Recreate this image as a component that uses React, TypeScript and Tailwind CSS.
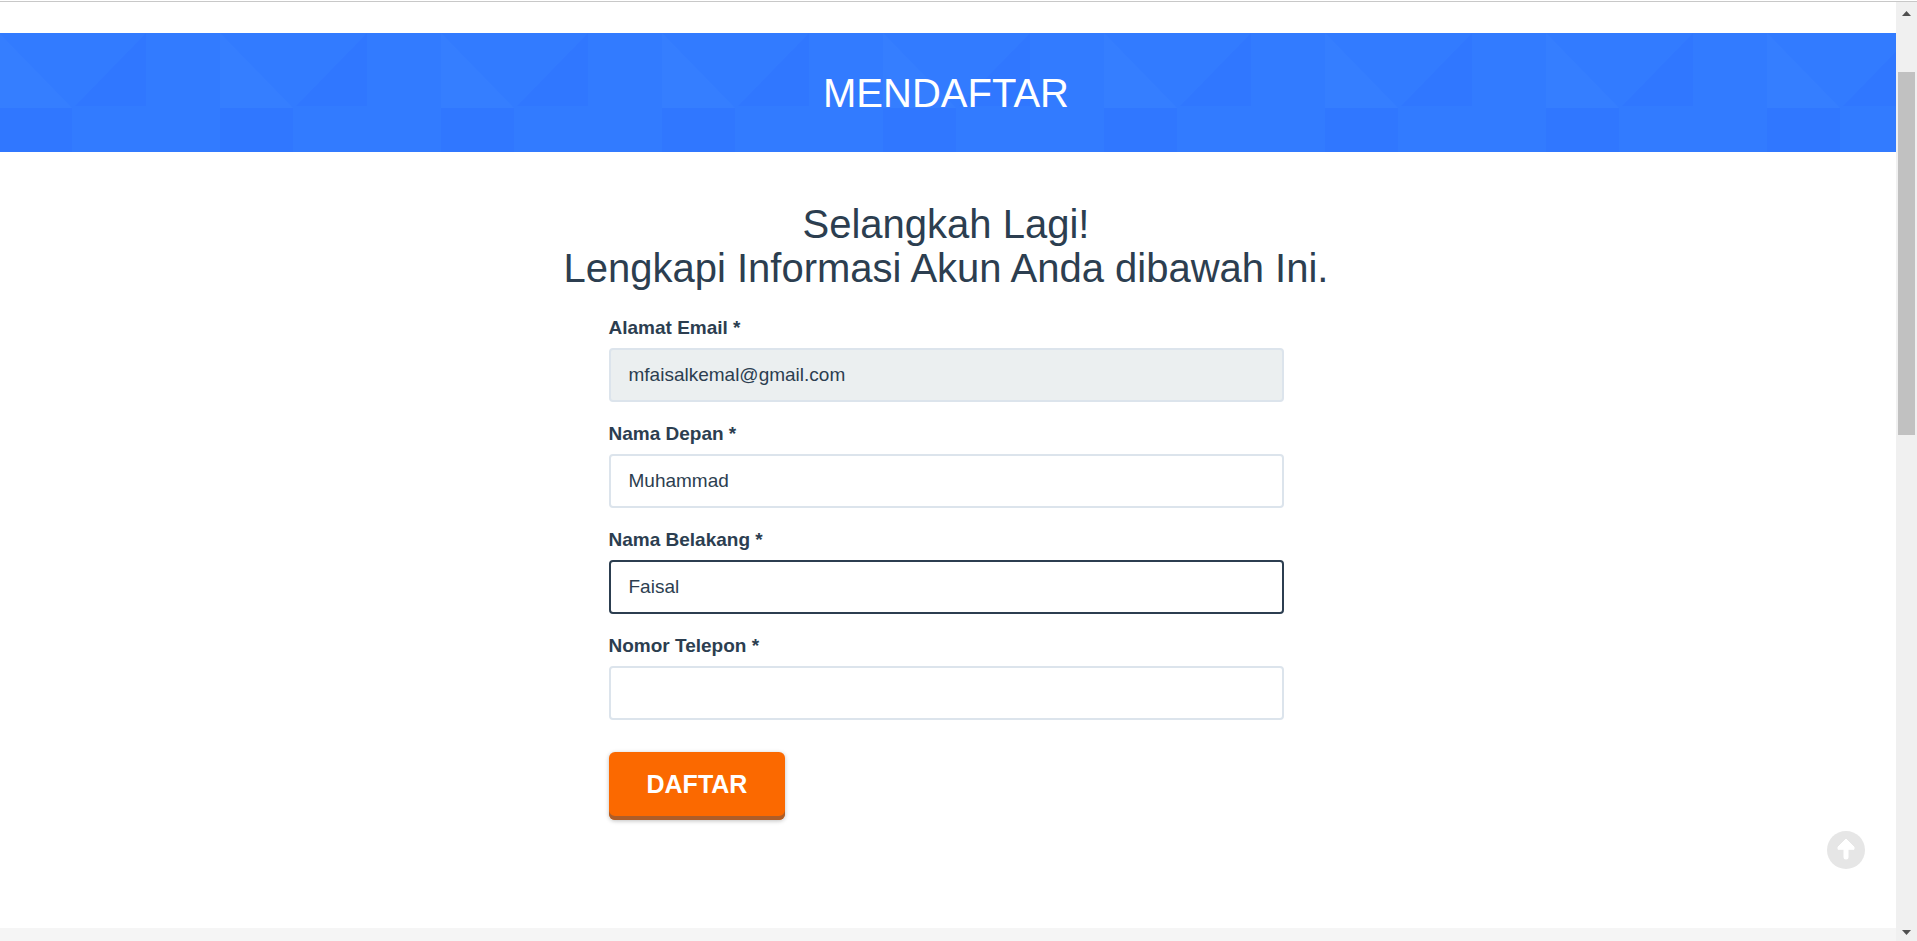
import { useState } from "react";

type Field = {
  id: string;
  label: string;
  type: string;
  value: string;
  readOnly?: boolean;
  active?: boolean;
};

const initialFields: Field[] = [
  { id: "email", label: "Alamat Email *", type: "email", value: "mfaisalkemal@gmail.com", readOnly: true },
  { id: "first-name", label: "Nama Depan *", type: "text", value: "Muhammad" },
  { id: "last-name", label: "Nama Belakang *", type: "text", value: "Faisal", active: true },
  { id: "phone", label: "Nomor Telepon *", type: "tel", value: "" },
];

function BannerPattern() {
  return (
    <svg className="absolute inset-0 h-full w-full" aria-hidden="true">
      <defs>
        <pattern id="tiles" x="-1" y="0" width="221" height="148" patternUnits="userSpaceOnUse">
          <path d="M0 0L73 75H0Z" fill="#357eff" />
          <path d="M76 73L147 0V73Z" fill="#3077ff" />
          <rect x="0" y="75" width="73" height="73" fill="#3077ff" />
        </pattern>
      </defs>
      <rect width="100%" height="100%" fill="url(#tiles)" />
    </svg>
  );
}

function Banner() {
  return (
    <header className="relative bg-[#327bff] pt-[37px] pr-1 pb-[35px]">
      <BannerPattern />
      <h1 className="relative text-center text-[40px] leading-[47px] text-white">MENDAFTAR</h1>
    </header>
  );
}

function TextField({ field, onChange }: { field: Field; onChange: (value: string) => void }) {
  const tone = field.active
    ? "border-[#2c3e50] bg-white"
    : field.readOnly
      ? "border-[#dce4ec] bg-[#ebeff0]"
      : "border-[#dce4ec] bg-white";
  return (
    <div className="flex flex-col gap-2">
      <label htmlFor={field.id} className="text-[19px] leading-6 font-bold">
        {field.label}
      </label>
      <input
        id={field.id}
        type={field.type}
        value={field.value}
        readOnly={field.readOnly}
        onChange={(event) => onChange(event.target.value)}
        className={`h-[54px] w-full rounded border-2 px-[18px] text-[19px] outline-none ${tone}`}
      />
    </div>
  );
}

function SignupForm() {
  const [fields, setFields] = useState(initialFields);
  const update = (id: string, value: string) =>
    setFields((current) => current.map((f) => (f.id === id ? { ...f, value } : f)));

  return (
    <form
      className="mx-auto flex w-full max-w-[675px] flex-col items-start"
      onSubmit={(event) => event.preventDefault()}
    >
      <div className="flex w-full flex-col gap-5">
        {fields.map((field) => (
          <TextField key={field.id} field={field} onChange={(value) => update(field.id, value)} />
        ))}
      </div>
      <button
        type="submit"
        className="mt-8 rounded-md bg-[#fb6900] px-[38px] pt-4 pb-5 text-[25px] leading-8 font-bold text-white shadow-[inset_0_-4px_0_#ad5d28,0_1px_4px_rgba(0,0,0,0.25)]"
      >
        DAFTAR
      </button>
    </form>
  );
}

function BackToTop() {
  return (
    <a
      href="#top"
      aria-label="Kembali ke atas"
      className="absolute right-[31px] bottom-[72px] flex size-[38px] items-center justify-center rounded-full bg-[#e6e6e6]"
    >
      <svg viewBox="0 0 38 38" className="size-[38px]" fill="none" aria-hidden="true">
        <path d="M19 26V14" stroke="#fff" strokeWidth="5" strokeLinecap="round" />
        <path
          d="M19 8L27 16V18.300H11V16Z"
          fill="#fff"
          stroke="#fff"
          strokeWidth="1"
          strokeLinejoin="round"
        />
      </svg>
    </a>
  );
}

function ScrollRail() {
  return (
    <aside className="flex w-[21px] shrink-0 flex-col items-center bg-[#f0f0f0]" aria-hidden="true">
      <div className="flex h-[70px] justify-center pt-[9px]">
        <svg viewBox="0 0 9 5" className="h-[5px] w-[9px]">
          <path d="M0 5L4.500 0L9 5Z" fill="#505050" />
        </svg>
      </div>
      <div className="h-[363px] w-[17px] bg-[#c1c1c1]" />
      <div className="mt-auto flex pb-[6px]">
        <svg viewBox="0 0 9 5" className="h-[5px] w-[9px]">
          <path d="M0 0L4.500 5L9 0Z" fill="#505050" />
        </svg>
      </div>
    </aside>
  );
}

export default function App() {
  return (
    <div
      id="top"
      className="flex min-h-screen flex-col bg-white pt-px font-['Liberation_Sans',Arial,sans-serif] text-[#2c3e50]"
    >
      <div className="flex grow border-t border-[#c8c8c8]">
        <div className="relative flex grow flex-col pt-[31px]">
          <Banner />
          <main className="pt-[50px] pr-5 pb-10 pl-4">
            <h2 className="mb-[26px] text-center text-[40px] leading-[44px]">
              Selangkah Lagi!
              <br />
              Lengkapi Informasi Akun Anda dibawah Ini.
            </h2>
            <SignupForm />
          </main>
          <footer className="mt-auto h-[13px] bg-[#f5f5f5]" />
          <BackToTop />
        </div>
        <ScrollRail />
      </div>
    </div>
  );
}
